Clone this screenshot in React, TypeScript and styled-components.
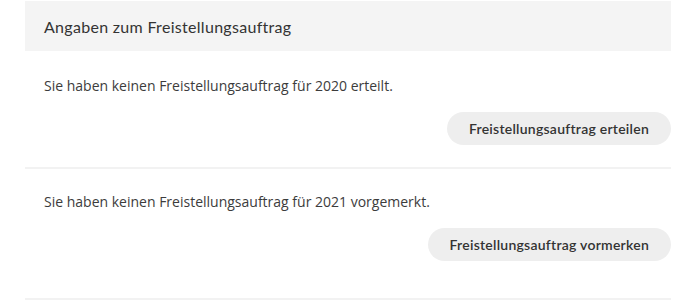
import styled, { createGlobalStyle } from 'styled-components';

const GlobalStyle = createGlobalStyle`
    body {
        margin: 0;
        background: #ffffff;
    }
`;

const Page = styled.div`
    width: 682px;
    height: 301px;
    padding: 1px 11px 0 25px;
    box-sizing: border-box;
    overflow: hidden;
`;

const Header = styled.div`
    height: 50px;
    background: #f4f4f4;
    display: flex;
    align-items: center;
    padding-left: 19px;
    font-family: "Lato", sans-serif;
    font-size: 16px;
    color: #333333;
    letter-spacing: 0.3px;
`;

const Section = styled.div<{ $top: number; $bottom: number }>`
    display: flex;
    flex-direction: column;
    padding: ${p => p.$top}px 0 ${p => p.$bottom}px 19px;
    border-bottom: 2px solid #f2f2f2;
`;

const Text = styled.p`
    margin: 0;
    font-family: "Open Sans", sans-serif;
    font-size: 14px;
    line-height: 18px;
    color: #3c3c3c;
`;

const Button = styled.button`
    align-self: flex-end;
    margin-top: 17px;
    height: 33px;
    padding: 0 22px;
    border: none;
    border-radius: 17px;
    background: #eeeeee;
    font-family: "Lato", sans-serif;
    font-weight: 600;
    font-size: 14px;
    color: #333333;
    letter-spacing: 0.25px;
    cursor: pointer;
`;

const App = () => {
    return (
        <>
            <GlobalStyle />
            <Page>
                <Header>Angaben zum Freistellungsauftrag</Header>
                <Section $top={26} $bottom={22}>
                    <Text>Sie haben keinen Freistellungsauftrag für 2020 erteilt.</Text>
                    <Button>Freistellungsauftrag erteilen</Button>
                </Section>
                <Section $top={24} $bottom={37}>
                    <Text>Sie haben keinen Freistellungsauftrag für 2021 vorgemerkt.</Text>
                    <Button>Freistellungsauftrag vormerken</Button>
                </Section>
            </Page>
        </>
    )
}

export default App;
